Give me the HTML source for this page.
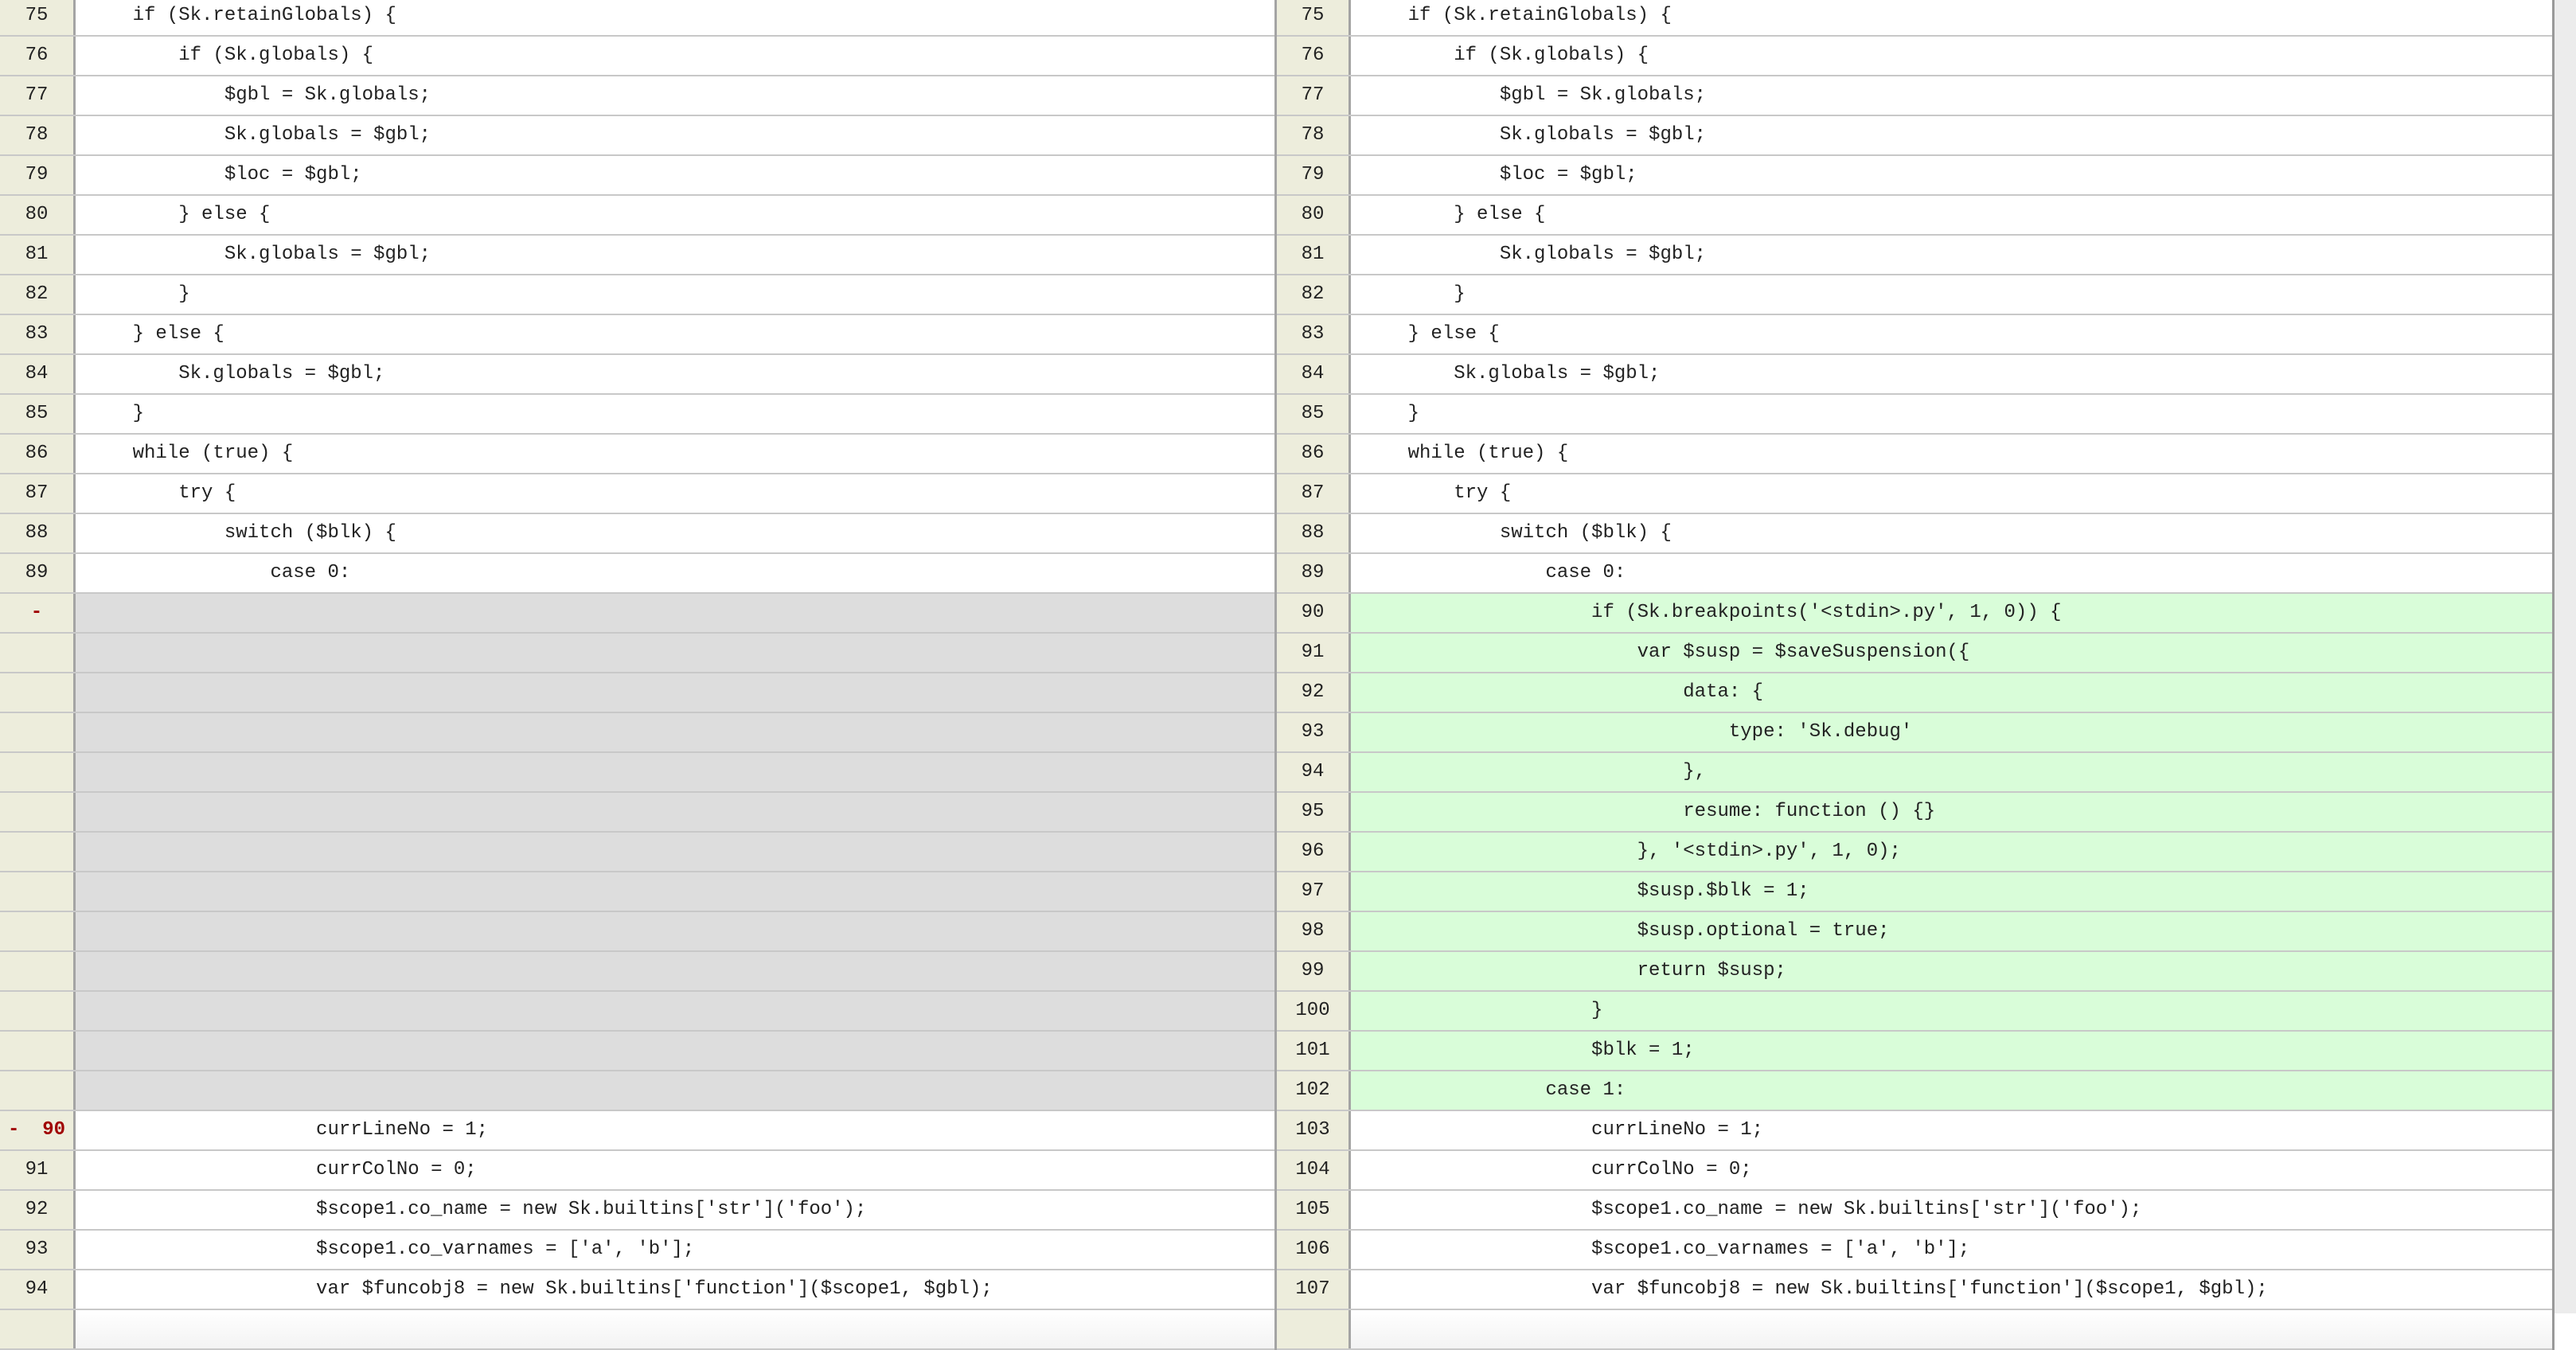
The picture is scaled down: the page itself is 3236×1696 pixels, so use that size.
<!DOCTYPE html>
<html><head><meta charset="utf-8"><style>
*{margin:0;padding:0;box-sizing:border-box}
body{width:3236px;height:1650px;overflow:hidden;background:#fff;position:relative;font-family:"Liberation Mono",monospace;font-size:24px;color:#222}
.p{position:absolute;top:-4px}
.l{left:0;width:1604px;border-right:3px solid #a4a4a4}
.r{left:1604px;width:1605px;border-right:3px solid #999}
.row{height:50px;border-bottom:2px solid #c8c8c8;display:flex;white-space:pre;line-height:48px}
.g{background:#ededdc;border-right:3px solid #a4a4a4;text-align:center;flex:none}
.l .g{width:95px}.r .g{width:93px}
.c{padding-left:14px;flex:1}
.e .c{background:#dddddd}
.a .c{background:#d9fdd9}
.red{color:#a00000}
.b{font-weight:bold}
.sb{position:absolute;left:3209px;top:0;width:27px;height:1650px;background:#ececec}
.last .c{background:linear-gradient(#fff,#f3f3f3)}
</style></head><body>
<div class="p l">
<div class="row"><div class="g">75</div><div class="c">    if (Sk.retainGlobals) {</div></div>
<div class="row"><div class="g">76</div><div class="c">        if (Sk.globals) {</div></div>
<div class="row"><div class="g">77</div><div class="c">            $gbl = Sk.globals;</div></div>
<div class="row"><div class="g">78</div><div class="c">            Sk.globals = $gbl;</div></div>
<div class="row"><div class="g">79</div><div class="c">            $loc = $gbl;</div></div>
<div class="row"><div class="g">80</div><div class="c">        } else {</div></div>
<div class="row"><div class="g">81</div><div class="c">            Sk.globals = $gbl;</div></div>
<div class="row"><div class="g">82</div><div class="c">        }</div></div>
<div class="row"><div class="g">83</div><div class="c">    } else {</div></div>
<div class="row"><div class="g">84</div><div class="c">        Sk.globals = $gbl;</div></div>
<div class="row"><div class="g">85</div><div class="c">    }</div></div>
<div class="row"><div class="g">86</div><div class="c">    while (true) {</div></div>
<div class="row"><div class="g">87</div><div class="c">        try {</div></div>
<div class="row"><div class="g">88</div><div class="c">            switch ($blk) {</div></div>
<div class="row"><div class="g">89</div><div class="c">                case 0:</div></div>
<div class="row e"><div class="g red b">-</div><div class="c"></div></div>
<div class="row e"><div class="g"></div><div class="c"></div></div>
<div class="row e"><div class="g"></div><div class="c"></div></div>
<div class="row e"><div class="g"></div><div class="c"></div></div>
<div class="row e"><div class="g"></div><div class="c"></div></div>
<div class="row e"><div class="g"></div><div class="c"></div></div>
<div class="row e"><div class="g"></div><div class="c"></div></div>
<div class="row e"><div class="g"></div><div class="c"></div></div>
<div class="row e"><div class="g"></div><div class="c"></div></div>
<div class="row e"><div class="g"></div><div class="c"></div></div>
<div class="row e"><div class="g"></div><div class="c"></div></div>
<div class="row e"><div class="g"></div><div class="c"></div></div>
<div class="row e"><div class="g"></div><div class="c"></div></div>
<div class="row"><div class="g red b">-  90</div><div class="c">                    currLineNo = 1;</div></div>
<div class="row"><div class="g">91</div><div class="c">                    currColNo = 0;</div></div>
<div class="row"><div class="g">92</div><div class="c">                    $scope1.co_name = new Sk.builtins['str']('foo');</div></div>
<div class="row"><div class="g">93</div><div class="c">                    $scope1.co_varnames = ['a', 'b'];</div></div>
<div class="row"><div class="g">94</div><div class="c">                    var $funcobj8 = new Sk.builtins['function']($scope1, $gbl);</div></div>
<div class="row last"><div class="g"></div><div class="c"></div></div>
</div>
<div class="p r">
<div class="row"><div class="g">75</div><div class="c">    if (Sk.retainGlobals) {</div></div>
<div class="row"><div class="g">76</div><div class="c">        if (Sk.globals) {</div></div>
<div class="row"><div class="g">77</div><div class="c">            $gbl = Sk.globals;</div></div>
<div class="row"><div class="g">78</div><div class="c">            Sk.globals = $gbl;</div></div>
<div class="row"><div class="g">79</div><div class="c">            $loc = $gbl;</div></div>
<div class="row"><div class="g">80</div><div class="c">        } else {</div></div>
<div class="row"><div class="g">81</div><div class="c">            Sk.globals = $gbl;</div></div>
<div class="row"><div class="g">82</div><div class="c">        }</div></div>
<div class="row"><div class="g">83</div><div class="c">    } else {</div></div>
<div class="row"><div class="g">84</div><div class="c">        Sk.globals = $gbl;</div></div>
<div class="row"><div class="g">85</div><div class="c">    }</div></div>
<div class="row"><div class="g">86</div><div class="c">    while (true) {</div></div>
<div class="row"><div class="g">87</div><div class="c">        try {</div></div>
<div class="row"><div class="g">88</div><div class="c">            switch ($blk) {</div></div>
<div class="row"><div class="g">89</div><div class="c">                case 0:</div></div>
<div class="row a"><div class="g">90</div><div class="c">                    if (Sk.breakpoints('&lt;stdin&gt;.py', 1, 0)) {</div></div>
<div class="row a"><div class="g">91</div><div class="c">                        var $susp = $saveSuspension({</div></div>
<div class="row a"><div class="g">92</div><div class="c">                            data: {</div></div>
<div class="row a"><div class="g">93</div><div class="c">                                type: 'Sk.debug'</div></div>
<div class="row a"><div class="g">94</div><div class="c">                            },</div></div>
<div class="row a"><div class="g">95</div><div class="c">                            resume: function () {}</div></div>
<div class="row a"><div class="g">96</div><div class="c">                        }, '&lt;stdin&gt;.py', 1, 0);</div></div>
<div class="row a"><div class="g">97</div><div class="c">                        $susp.$blk = 1;</div></div>
<div class="row a"><div class="g">98</div><div class="c">                        $susp.optional = true;</div></div>
<div class="row a"><div class="g">99</div><div class="c">                        return $susp;</div></div>
<div class="row a"><div class="g">100</div><div class="c">                    }</div></div>
<div class="row a"><div class="g">101</div><div class="c">                    $blk = 1;</div></div>
<div class="row a"><div class="g">102</div><div class="c">                case 1:</div></div>
<div class="row"><div class="g">103</div><div class="c">                    currLineNo = 1;</div></div>
<div class="row"><div class="g">104</div><div class="c">                    currColNo = 0;</div></div>
<div class="row"><div class="g">105</div><div class="c">                    $scope1.co_name = new Sk.builtins['str']('foo');</div></div>
<div class="row"><div class="g">106</div><div class="c">                    $scope1.co_varnames = ['a', 'b'];</div></div>
<div class="row"><div class="g">107</div><div class="c">                    var $funcobj8 = new Sk.builtins['function']($scope1, $gbl);</div></div>
<div class="row last"><div class="g"></div><div class="c"></div></div>
</div>
<div class="sb"></div>
</body></html>
